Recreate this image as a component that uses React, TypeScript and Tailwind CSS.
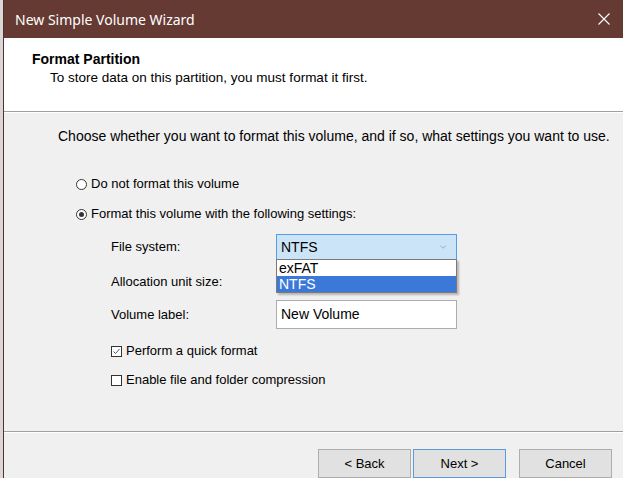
import { ChevronDown } from "lucide-react";

function Radio({ checked, label }: { checked?: boolean; label: string }) {
  return (
    <div className="flex items-center h-[16px]">
      <span className="w-[11px] h-[11px] rounded-full border border-[#333] bg-white flex items-center justify-center mr-[4px]">
        {checked && <span className="w-[5px] h-[5px] rounded-full bg-[#333]" />}
      </span>
      <span>{label}</span>
    </div>
  );
}

function Check({ checked, label }: { checked?: boolean; label: string }) {
  return (
    <div className="flex items-center h-[16px]">
      <span className="w-[11px] h-[11px] border border-[#333] bg-white flex items-center justify-center mr-[4px]">
        {checked && (
          <svg width="9" height="9" viewBox="0 0 9 9">
            <path d="M1.5 4.5 L3.5 6.5 L7.5 2" fill="none" stroke="#555" strokeWidth="1" />
          </svg>
        )}
      </span>
      <span>{label}</span>
    </div>
  );
}

function Button({ label, focused }: { label: string; focused?: boolean }) {
  return (
    <button
      className={
        "w-[93px] h-[29px] bg-[#e1e1e1] border text-[13px] text-black " +
        (focused ? "border-[#5a9be0]" : "border-[#adadad]")
      }
    >
      {label}
    </button>
  );
}

export default function App() {
  return (
    <div
      className="w-[623px] h-[478px] flex overflow-hidden bg-[#f0f0f0] text-[13px] text-black"
      style={{ fontFamily: '"Liberation Sans", Arial, sans-serif' }}
    >
      {/* background window peeking through */}
      <div className="w-[3px] bg-[#d8d8d8] flex-shrink-0" />

      {/* wizard */}
      <div className="flex-1 flex flex-col border-l border-[#5b2f29]">
        {/* title bar */}
        <div className="h-[38px] bg-[#653a33] flex items-center justify-between pl-[11px] pr-[13px] flex-shrink-0">
          <span
            className="text-white text-[14px]"
            style={{ fontFamily: '"Noto Sans", "Open Sans", sans-serif' }}
          >
            New Simple Volume Wizard
          </span>
          <svg width="12" height="12" viewBox="0 0 12 12">
            <path d="M0.5 0.5 L11.5 11.5 M11.5 0.5 L0.5 11.5" stroke="#fff" strokeWidth="1.1" />
          </svg>
        </div>

        {/* header */}
        <div className="h-[74px] bg-white border-b border-[#a0a0a0] pl-[28px] pt-[13px] flex-shrink-0">
          <div className="font-bold text-[14px] leading-[16px]">Format Partition</div>
          <div className="pl-[18px] mt-[3px] text-[13.5px] leading-[16px]">
            To store data on this partition, you must format it first.
          </div>
        </div>

        {/* body */}
        <div className="flex-1 border-t border-white pl-[54px] pt-[15px] flex flex-col">
          <div className="text-[14px] leading-[16px]">
            Choose whether you want to format this volume, and if so, what settings you want to use.
          </div>

          <div className="pl-[18px] mt-[32px] flex flex-col gap-[14px]">
            <Radio label="Do not format this volume" />
            <Radio checked label="Format this volume with the following settings:" />
          </div>

          <div className="pl-[53px] mt-[12px] grid grid-cols-[165px_181px] items-center">
            <div>File system:</div>
            <div className="relative">
              <div className="h-[26px] bg-[#cce4f7] border border-[#569de5] flex items-center justify-between pl-[4px] pr-[8px] text-[14px]">
                <span>NTFS</span>
                <ChevronDown className="w-[10px] h-[10px] text-[#7a8a99]" strokeWidth={1.5} />
              </div>
              <div className="absolute left-0 top-[25px] w-[181px] bg-white border border-[#7a7a7a] shadow-[2px_2px_2px_rgba(0,0,0,0.25)] text-[14px] z-10">
                <div className="h-[16px] leading-[16px] pl-[2px]">exFAT</div>
                <div className="h-[16px] leading-[16px] pl-[2px] bg-[#3c78d8] text-white">NTFS</div>
              </div>
            </div>

            <div className="mt-[9px] h-[26px] flex items-center">Allocation unit size:</div>
            <div className="mt-[9px] h-[26px]" />

            <div className="mt-[5px]">Volume label:</div>
            <div className="mt-[5px] h-[29px] bg-white border border-[#acacac] flex items-center pl-[4px] text-[14px]">
              New Volume
            </div>
          </div>

          <div className="pl-[53px] mt-[14px] flex flex-col gap-[13px]">
            <Check checked label="Perform a quick format" />
            <Check label="Enable file and folder compression" />
          </div>

          <div className="flex-1" />
        </div>

        {/* footer */}
        <div className="h-[47px] border-t border-[#a0a0a0] flex-shrink-0 flex flex-col">
          <div className="border-t border-white flex-1 flex items-start justify-end pt-[16px] pr-[11px]">
            <Button label="< Back" />
            <div className="w-[2px]" />
            <Button focused label="Next >" />
            <div className="w-[13px]" />
            <Button label="Cancel" />
          </div>
        </div>
      </div>
    </div>
  );
}
